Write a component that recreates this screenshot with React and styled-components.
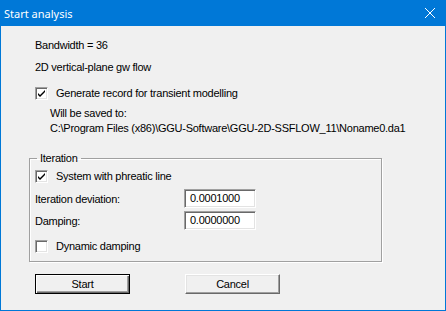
import React from "react";
import styled, { createGlobalStyle } from "styled-components";

const GlobalStyle = createGlobalStyle`
  html, body {
    margin: 0;
    padding: 0;
    background: #f0f0f0;
  }
  body {
    font-family: "Liberation Sans", Arial, sans-serif;
    font-size: 11px;
    letter-spacing: -0.25px;
    color: #000;
  }
`;

const Window = styled.div`
  width: 446px;
  height: 311px;
  box-sizing: border-box;
  border: 1px solid #0078d7;
  border-top: none;
  background: #f0f0f0;
  display: flex;
  flex-direction: column;
`;

const TitleBar = styled.div`
  height: 26px;
  margin: 0 -1px;
  background: #0078d7;
  display: flex;
  align-items: center;
  justify-content: space-between;
  padding: 0 10px 0 4px;
  color: #fff;
  font-family: "Noto Sans", "Liberation Sans", sans-serif;
  font-size: 11px;
  letter-spacing: 0;
`;

const Body = styled.div`
  flex: 1;
  padding: 12px 0 0 34px;
  display: flex;
  flex-direction: column;
`;

const Line = styled.div`
  height: 14px;
  line-height: 14px;
  white-space: nowrap;
  margin-top: ${(p) => p.$mt || 0}px;
  padding-left: ${(p) => p.$indent || 0}px;
`;

const CheckRow = styled.label`
  display: flex;
  align-items: center;
  height: 14px;
  line-height: 14px;
  margin-top: ${(p) => p.$mt || 0}px;
  white-space: nowrap;
`;

const Box = styled.span`
  width: 13px;
  height: 13px;
  box-sizing: border-box;
  background: #fff;
  border-style: solid;
  border-width: 1px;
  border-color: #a0a0a0 #fff #fff #a0a0a0;
  box-shadow: inset 1px 1px 0 #696969, inset -1px -1px 0 #e3e3e3;
  margin-right: 8px;
  display: flex;
  align-items: center;
  justify-content: center;
`;

const Group = styled.fieldset`
  margin: 16px 0 0 -6px;
  width: 353px;
  height: 111px;
  box-sizing: border-box;
  border: 1px solid #a0a0a0;
  box-shadow: inset 1px 1px 0 #fff, 1px 1px 0 #fff;
  padding: 4px 0 0 5px;
  display: flex;
  flex-direction: column;
`;

const Legend = styled.legend`
  padding: 0 3px;
  margin-left: 2px;
  line-height: 14px;
`;

const FieldRow = styled.div`
  display: grid;
  grid-template-columns: 149px 72px;
  align-items: center;
  height: 19px;
  margin-top: ${(p) => p.$mt || 0}px;
`;

const Input = styled.div`
  height: 19px;
  box-sizing: border-box;
  background: #fff;
  border-style: solid;
  border-width: 1px;
  border-color: #a0a0a0 #fff #fff #a0a0a0;
  box-shadow: inset 1px 1px 0 #696969, inset -1px -1px 0 #e3e3e3;
  padding: 0 5px;
  line-height: 17px;
`;

const Buttons = styled.div`
  display: flex;
  gap: 55px;
  margin-top: 12px;
`;

const Button = styled.button`
  width: 95px;
  height: 20px;
  box-sizing: border-box;
  font: inherit;
  letter-spacing: inherit;
  color: #000;
  background: #f0f0f0;
  padding: 0;
  border-style: solid;
  border-width: 1px;
  border-color: ${(p) => (p.$default ? "#000" : "#fff #696969 #696969 #fff")};
  box-shadow: ${(p) =>
    p.$default
      ? "inset 1px 1px 0 #fff, inset -1px -1px 0 #696969, inset -2px -2px 0 #a0a0a0"
      : "inset -1px -1px 0 #a0a0a0, inset 1px 1px 0 #e3e3e3"};
`;

const Check = () => (
  <svg width="9" height="9" viewBox="0 0 9 9">
    <path d="M1 4 L3 6 L8 1 L8 3 L3 8 L1 6 Z" fill="#000" />
  </svg>
);

const Close = () => (
  <svg width="12" height="12" viewBox="0 0 12 12">
    <path d="M1 1 L11 11 M11 1 L1 11" stroke="#fff" strokeWidth="1" />
  </svg>
);

export default function App() {
  return (
    <>
      <GlobalStyle />
      <Window>
        <TitleBar>
          <span>Start analysis</span>
          <Close />
        </TitleBar>
        <Body>
          <Line>Bandwidth = 36</Line>
          <Line $mt={8}>2D vertical-plane gw flow</Line>
          <CheckRow $mt={12}>
            <Box>
              <Check />
            </Box>
            Generate record for transient modelling
          </CheckRow>
          <Line $mt={6} $indent={15}>Will be saved to:</Line>
          <Line $mt={1} $indent={15}>
            C:\Program Files (x86)\GGU-Software\GGU-2D-SSFLOW_11\Noname0.da1
          </Line>
          <Group>
            <Legend>Iteration</Legend>
            <CheckRow>
              <Box>
                <Check />
              </Box>
              System with phreatic line
            </CheckRow>
            <FieldRow $mt={6}>
              <span>Iteration deviation:</span>
              <Input>0.0001000</Input>
            </FieldRow>
            <FieldRow $mt={3}>
              <span>Damping:</span>
              <Input>0.0000000</Input>
            </FieldRow>
            <CheckRow $mt={9}>
              <Box />
              Dynamic damping
            </CheckRow>
          </Group>
          <Buttons>
            <Button $default>Start</Button>
            <Button>Cancel</Button>
          </Buttons>
        </Body>
      </Window>
    </>
  );
}
